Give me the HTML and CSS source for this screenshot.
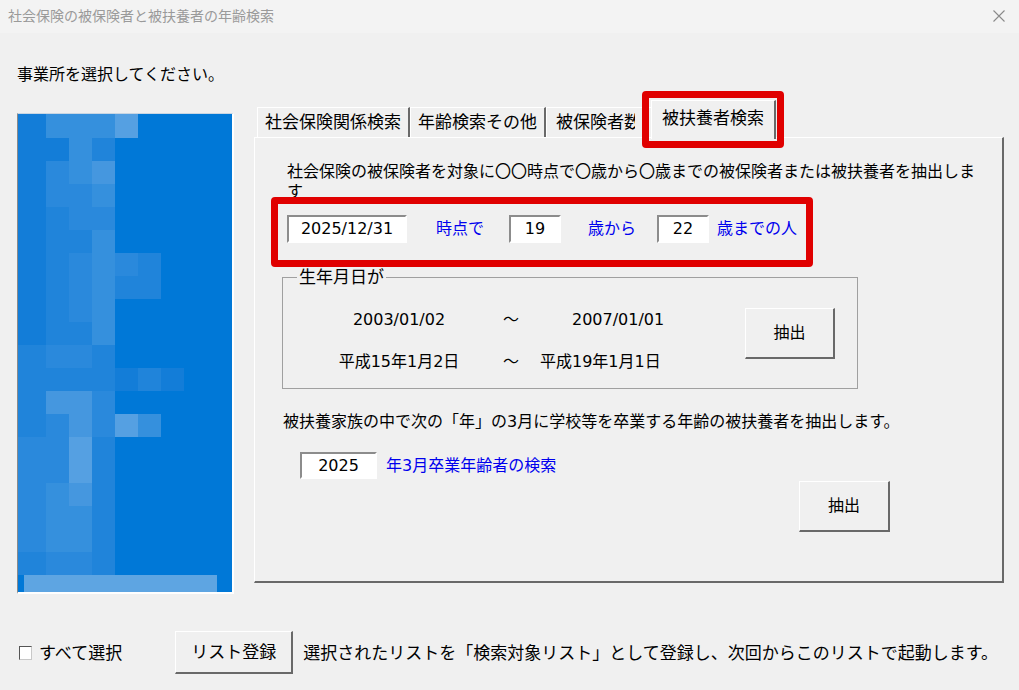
FILE: index.html
```html
<!DOCTYPE html>
<html lang="ja">
<head>
    <meta charset="UTF-8">
    <meta name="viewport" content="width=device-width, initial-scale=1.0">
    <title>社会保険の被保険者と被扶養者の年齢検索</title>
    <link rel="stylesheet" href="styles.css">
</head>
<body>
    <div class="titlebar">
        <span>社会保険の被保険者と被扶養者の年齢検索</span>
        <svg class="close" width="12" height="12" viewBox="0 0 12 12"><path d="M0.5 0.5 L11.5 11.5 M11.5 0.5 L0.5 11.5" stroke="#8a8a8a" stroke-width="1.1" fill="none"/></svg>
    </div>

    <div class="prompt">事業所を選択してください。</div>

    <div class="main">
        <!-- blurred office list -->
        <div class="listbox">
            <div class="mosaic">
                <span class="s1"></span><span class="s4"></span><span class="s4"></span><span class="s4"></span><span class="s6"></span><span></span><span></span>
                <span class="s1"></span><span class="s1"></span><span class="s4"></span><span class="s2"></span><span></span><span></span><span></span>
                <span class="s1"></span><span class="s3"></span><span class="s4"></span><span class="s5"></span><span></span><span></span><span></span>
                <span class="s1"></span><span class="s3"></span><span class="s3"></span><span class="s4"></span><span></span><span></span><span></span>
                <span class="s1"></span><span class="s2"></span><span class="s3"></span><span class="s3"></span><span></span><span></span><span></span>
                <span class="s1"></span><span class="s2"></span><span class="s2"></span><span class="s4"></span><span></span><span></span><span></span>
                <span class="s1"></span><span class="s2"></span><span class="s3"></span><span class="s4"></span><span class="s3"></span><span class="s2"></span><span></span>
                <span class="s1"></span><span class="s2"></span><span class="s3"></span><span class="s4"></span><span class="s2"></span><span class="s2"></span><span></span>
                <span class="s1"></span><span class="s2"></span><span class="s3"></span><span class="s4"></span><span></span><span></span><span></span>
                <span class="s1"></span><span class="s2"></span><span class="s2"></span><span class="s4"></span><span></span><span></span><span></span>
                <span class="s2"></span><span class="s3"></span><span class="s3"></span><span class="s2"></span><span></span><span></span><span></span>
                <span class="s2"></span><span class="s2"></span><span class="s2"></span><span class="s2"></span><span class="s1"></span><span class="s2"></span><span class="s1"></span>
                <span class="s2"></span><span class="s5"></span><span class="s5"></span><span class="s3"></span><span></span><span></span><span></span>
                <span class="s2"></span><span class="s3"></span><span class="s5"></span><span class="s3"></span><span class="s6"></span><span class="s4"></span><span></span>
                <span class="s3"></span><span class="s3"></span><span class="s6"></span><span class="s2"></span><span></span><span></span><span></span>
                <span class="s3"></span><span class="s3"></span><span class="s6"></span><span class="s2"></span><span></span><span></span><span></span>
                <span class="s3"></span><span class="s4"></span><span class="s5"></span><span class="s2"></span><span></span><span></span><span></span>
                <span class="s3"></span><span class="s4"></span><span class="s4"></span><span class="s2"></span><span></span><span></span><span></span>
                <span class="s3"></span><span class="s4"></span><span class="s4"></span><span class="s2"></span><span></span><span></span><span></span>
                <span class="s2"></span><span class="s3"></span><span class="s3"></span><span class="s2"></span><span></span><span></span><span></span>
            </div>
            <div class="list-last"><span></span></div>
        </div>

        <div class="tabarea">
            <div class="tabs">
                <div class="tab">社会保険関係検索</div>
                <div class="tab">年齢検索その他</div>
                <div class="tab tab-cut"><span class="tab-clip">被保険者数</span></div>
                <div class="tab active">被扶養者検索</div>
            </div>
            <div class="panel">
                <div class="desc">社会保険の被保険者を対象に〇〇時点で〇歳から〇歳までの被保険者または被扶養者を抽出します</div>

                <div class="criteria">
                    <div class="field date">2025/12/31</div>
                    <span class="lbl lbl-point">時点で</span>
                    <div class="field num num-from">19</div>
                    <span class="lbl lbl-from">歳から</span>
                    <div class="field num num-to">22</div>
                    <span class="lbl lbl-to">歳までの人</span>
                </div>

                <fieldset class="birth">
                    <legend>生年月日が</legend>
                    <div class="birth-body">
                        <div class="dates">
                            <span class="d-from">2003/01/02</span>
                            <span class="tilde">～</span>
                            <span class="d-to d-to-first">2007/01/01</span>
                            <span class="d-from">平成15年1月2日</span>
                            <span class="tilde">～</span>
                            <span class="d-to">平成19年1月1日</span>
                        </div>
                        <div class="btn extract-1">抽出</div>
                    </div>
                </fieldset>

                <div class="note">被扶養家族の中で次の「年」の3月に学校等を卒業する年齢の被扶養者を抽出します。</div>

                <div class="grad-row">
                    <div class="field year">2025</div>
                    <span class="lbl lbl-grad">年3月卒業年齢者の検索</span>
                </div>

                <div class="btn extract-2">抽出</div>
            </div>
        </div>
    </div>

    <div class="footer">
        <span class="check"></span>
        <span class="check-label">すべて選択</span>
        <div class="btn btn-register">リスト登録</div>
        <span class="footer-note">選択されたリストを「検索対象リスト」として登録し、次回からこのリストで起動します。</span>
    </div>

    <div class="mark mark-tab"></div>
    <div class="mark mark-criteria"></div>
</body>
</html>
```

FILE: styles.css
```css
body {
    margin: 0;
    width: 1019px;
    height: 690px;
    overflow: hidden;
    position: relative;
    background-color: #f0f0f0;
    font-family: "DejaVu Sans", "Noto Sans CJK JP", sans-serif;
    font-size: 16px;
    line-height: 20px;
    color: #000;
}
.titlebar {
    height: 33px;
    box-sizing: border-box;
    padding: 0 14px 2px 8px;
    display: flex;
    align-items: center;
    justify-content: space-between;
    background-color: #f3f3f3;
    color: #9a9a9a;
    font-size: 14px;
}
.prompt {
    margin: 32px 0 0 17px;
}
.main {
    display: flex;
    margin-top: 15px;
    padding-left: 17px;
    height: 494px;
}

/* list box */
.listbox {
    margin-top: 13px;
    width: 217px;
    height: 481px;
    box-sizing: border-box;
    border-left: 1px solid #8a8a8a;
    border-top: 1px solid #c9d6e3;
    border-right: 2px solid #fff;
    border-bottom: 2px solid #fff;
    background-color: #0078d7;
}
.mosaic {
    display: grid;
    grid-template-columns: 28px repeat(6, 23px);
    grid-template-rows: 24px repeat(19, 23px);
}
.mosaic span { background-color: #0078d7; }
.mosaic .s1 { background-color: #137dd8; }
.mosaic .s2 { background-color: #2084da; }
.mosaic .s3 { background-color: #2a89dc; }
.mosaic .s4 { background-color: #3590dd; }
.mosaic .s5 { background-color: #4597df; }
.mosaic .s6 { background-color: #55a0e2; }
.list-last {
    height: 17px;
    padding-left: 6px;
}
.list-last span {
    display: block;
    width: 193px;
    height: 17px;
    background-color: #5ea5e2;
}

/* tabs */
.tabarea {
    margin-left: 20px;
    width: 750px;
}
.tabs {
    display: flex;
    align-items: flex-end;
    height: 37px;
    padding-left: 3px;
}
.tab {
    height: 30px;
    box-sizing: border-box;
    padding: 0 7px;
    font-size: 17px;
    line-height: 28px;
    border-top: 1px solid #fff;
    border-left: 1px solid #fff;
    border-right: 2px solid #696969;
    white-space: nowrap;
}
.tab-cut {
    padding: 0 16px 0 9px;
    border-right: none;
}
.tab-clip {
    display: block;
    width: 79px;
    overflow: hidden;
}
.tab.active {
    position: relative;
    z-index: 1;
    height: 39px;
    margin-bottom: -2px;
    padding: 0 10px;
    line-height: 34px;
    background-color: #f0f0f0;
}
.panel {
    height: 446px;
    box-sizing: border-box;
    border-top: 1px solid #fff;
    border-left: 1px solid #fff;
    border-right: 2px solid #696969;
    border-bottom: 2px solid #696969;
}
.desc {
    margin: 24px 0 0 32px;
    width: 700px;
}
.criteria {
    display: flex;
    align-items: center;
    height: 28px;
    margin: 13px 0 0 32px;
}
.field {
    height: 28px;
    box-sizing: border-box;
    border: 2px solid;
    border-color: #8c8c8c #fff #fff #8c8c8c;
    background-color: #fff;
    text-align: center;
    line-height: 24px;
}
.field.date { width: 120px; }
.field.num { width: 52px; }
.num-from { margin-left: 25px; }
.num-to { margin-left: 21px; width: 51px; }
.lbl { color: #0000ee; }
.lbl-point { margin-left: 29px; }
.lbl-from { margin-left: 27px; }
.lbl-to { margin-left: 8px; }

/* birth date group */
.birth {
    margin: 24px 0 0 27px;
    width: 576px;
    box-sizing: border-box;
    padding: 0;
    border: 1px solid #a0a0a0;
}
.birth legend {
    margin-left: 14px;
    padding: 0 2px;
    font-size: 17px;
    line-height: 20px;
}
.birth-body {
    display: flex;
    align-items: flex-start;
    padding: 23px 0 16px 52px;
}
.dates {
    display: grid;
    grid-template-columns: 128px 77px 140px;
    row-gap: 22px;
}
.d-from { text-align: center; }
.tilde { padding-left: 40px; }
.d-to-first { padding-left: 32px; }
.btn {
    box-sizing: border-box;
    border-top: 1px solid #fff;
    border-left: 1px solid #fff;
    border-right: 2px solid #696969;
    border-bottom: 2px solid #696969;
    background-color: #f0f0f0;
    display: flex;
    align-items: center;
    justify-content: center;
}
.extract-1 {
    width: 90px;
    height: 51px;
    margin: -2px 0 0 65px;
}
.note {
    margin: 23px 0 0 28px;
}
.grad-row {
    display: flex;
    align-items: center;
    margin: 20px 0 0 45px;
}
.field.year {
    width: 77px;
    height: 27px;
    line-height: 23px;
}
.lbl-grad { margin-left: 9px; }
.extract-2 {
    width: 91px;
    height: 51px;
    margin: 2px 0 0 544px;
}

/* footer */
.footer {
    display: flex;
    align-items: center;
    height: 43px;
    margin-top: 37px;
    padding-left: 19px;
    font-size: 17px;
}
.check {
    width: 13px;
    height: 14px;
    box-sizing: border-box;
    border: 1px solid;
    border-color: #555 #c8c8c8 #c8c8c8 #555;
    background-color: #fff;
}
.check-label { margin-left: 7px; }
.btn-register {
    width: 118px;
    height: 43px;
    margin-left: 53px;
}
.footer-note { margin-left: 10px; }

/* red highlight frames */
.mark {
    position: absolute;
    box-sizing: border-box;
    border: 7px solid #e00000;
    border-radius: 4px;
}
.mark-tab {
    left: 642px;
    top: 91px;
    width: 142px;
    height: 57px;
}
.mark-criteria {
    left: 271px;
    top: 197px;
    width: 542px;
    height: 70px;
}
```
